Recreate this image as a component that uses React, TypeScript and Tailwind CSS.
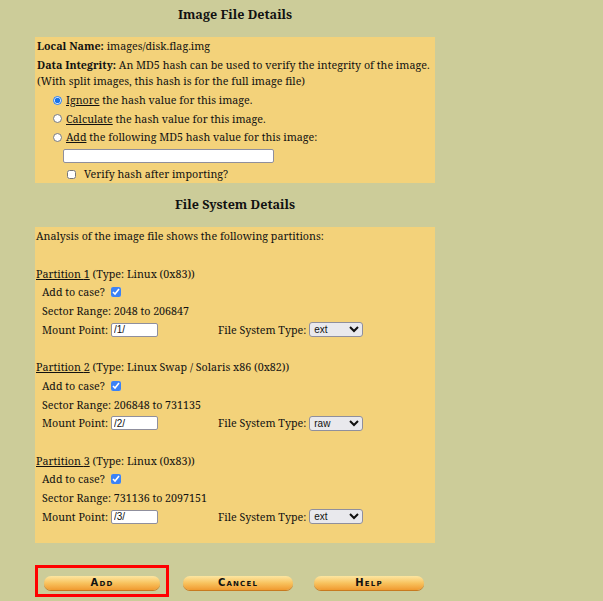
import React from "react"

const serif = "font-['Noto_Serif','DejaVu_Serif',serif]"

function Row({ children, className = "" }: { children?: React.ReactNode; className?: string }) {
  return <div className={`h-[18.7px] flex items-center whitespace-nowrap ${className}`}>{children}</div>
}

function Partition({ num, type, range, mount, fs }: { num: number; type: string; range: string; mount: string; fs: string }) {
  return (
    <div>
      <Row>
        <span className="underline">Partition {num}</span>&nbsp;(Type: {type})
      </Row>
      <Row className="pl-[6px]">
        Add to case?
        <input type="checkbox" defaultChecked className="ml-[6px] w-[10px] h-[10px] accent-[#3b82f6]" />
      </Row>
      <Row className="pl-[6px]">Sector Range: {range}</Row>
      <Row className="pl-[6px]">
        <span className="w-[69px]">Mount Point:</span>
        <input
          type="text"
          defaultValue={mount}
          className="w-[47px] h-[14px] bg-white border border-[#8f8f9d] rounded-[2px] px-[2px] text-[10px] font-['Liberation_Sans',sans-serif] outline-none"
        />
        <span className="ml-[60px]">File System Type:</span>
        <select
          defaultValue={fs}
          className="ml-[3px] w-[54px] h-[15px] text-[10px] font-['Liberation_Sans',sans-serif] bg-[#e9e9ed] border border-[#8f8f9d] rounded-[3px]"
        >
          <option>ext</option>
          <option>raw</option>
          <option>swap</option>
        </select>
      </Row>
    </div>
  )
}

function PillButton({ label, width }: { label: string; width: string }) {
  return (
    <button className={`${width} h-[14px] rounded-full bg-gradient-to-b from-[#fde6a0] via-[#f8c35e] to-[#f09a2e] shadow-[0_1px_0_#c77a20] flex items-center justify-center`}>
      <span className="text-[10px] leading-none font-black font-['DejaVu_Sans','Liberation_Sans',sans-serif] text-[#111] tracking-[1.2px] [font-variant-caps:small-caps]">
        {label}
      </span>
    </button>
  )
}

export default function App() {
  return (
    <div className={`min-h-[601px] w-[603px] bg-[#cccc99] text-[10.7px] text-[#111] ${serif}`}>
      <div className="w-[400px] ml-[35px]">
        <h2 className="h-[37px] flex items-center justify-center text-[12.6px] font-bold pb-[6px]">Image File Details</h2>

        <div className="bg-[#f3d27a] px-[2px] h-[146px]">
          <Row><b>Local Name:</b>&nbsp;images/disk.flag.img</Row>
          <div className="leading-[16px] pt-[1px] whitespace-nowrap">
            <b>Data Integrity:</b> An MD5 hash can be used to verify the integrity of the image.
            <br />
            (With split images, this hash is for the full image file)
          </div>
          <div className="pl-[16px] pt-[2px]">
            <Row className="h-[18.5px]">
              <input type="radio" name="hash" defaultChecked className="w-[9px] h-[9px] mr-[4px] accent-[#1a73e8]" />
              <span className="underline">Ignore</span>&nbsp;the hash value for this image.
            </Row>
            <Row className="h-[18.5px]">
              <input type="radio" name="hash" className="w-[9px] h-[9px] mr-[4px]" />
              <span className="underline">Calculate</span>&nbsp;the hash value for this image.
            </Row>
            <Row className="h-[18.5px]">
              <input type="radio" name="hash" className="w-[9px] h-[9px] mr-[4px]" />
              <span className="underline">Add</span>&nbsp;the following MD5 hash value for this image:
            </Row>
            <div className="pl-[10px] pt-[2px]">
              <input type="text" className="w-[211px] h-[14px] bg-white border border-[#8f8f9d] rounded-[2px] outline-none block" />
            </div>
            <Row className="pl-[14px] mt-[2px]">
              <input type="checkbox" className="w-[9px] h-[9px] mr-[8px]" />
              Verify hash after importing?
            </Row>
          </div>
        </div>

        <h2 className="h-[44px] flex items-center justify-center text-[12.6px] font-bold">File System Details</h2>

        <div className="bg-[#f3d27a] px-[1px] h-[316px]">
          <Row>Analysis of the image file shows the following partitions:</Row>
          <Row />
          <Partition num={1} type="Linux (0x83)" range="2048 to 206847" mount="/1/" fs="ext" />
          <Row />
          <Partition num={2} type="Linux Swap / Solaris x86 (0x82)" range="206848 to 731135" mount="/2/" fs="raw" />
          <Row />
          <Partition num={3} type="Linux (0x83)" range="731136 to 2097151" mount="/3/" fs="ext" />
        </div>
      </div>

      <div className="flex items-center ml-[35px] mt-[22px] w-[400px]">
        <div className="border-[3px] border-[#ff0000] w-[134px] h-[32px] flex items-center justify-center pt-[3px]">
          <PillButton label="Add" width="w-[116px]" />
        </div>
        <div className="ml-[14px] pt-[3px]">
          <PillButton label="Cancel" width="w-[110px]" />
        </div>
        <div className="ml-[21px] pt-[3px]">
          <PillButton label="Help" width="w-[110px]" />
        </div>
      </div>
    </div>
  )
}
